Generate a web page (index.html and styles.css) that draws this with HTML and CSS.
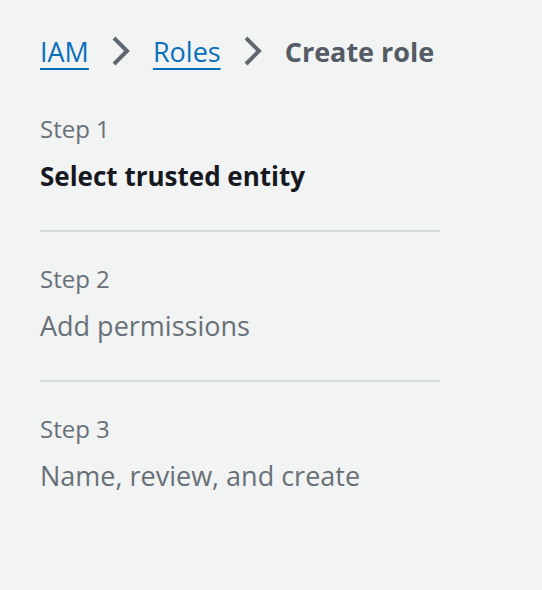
FILE: index.html
```html
<!DOCTYPE html>
<html>
<head>
<meta charset="utf-8">
<link rel="stylesheet" href="styles.css">
</head>
<body>
<div class="page">
  <nav class="crumbs">
    <a class="crumb-link" href="#">IAM</a>
    <svg class="chev" width="20" height="30" viewBox="0 0 20 30"><path d="M3 2 L16 15 L3 28" fill="none" stroke="#5f6770" stroke-width="4"/></svg>
    <a class="crumb-link" href="#">Roles</a>
    <svg class="chev" width="20" height="30" viewBox="0 0 20 30"><path d="M3 2 L16 15 L3 28" fill="none" stroke="#5f6770" stroke-width="4"/></svg>
    <span class="crumb-current">Create role</span>
  </nav>
  <ol class="steps">
    <li class="step">
      <div class="step-label">Step 1</div>
      <div class="step-title active">Select trusted entity</div>
    </li>
    <li class="step">
      <div class="step-label">Step 2</div>
      <div class="step-title">Add permissions</div>
    </li>
    <li class="step last">
      <div class="step-label">Step 3</div>
      <div class="step-title">Name, review, and create</div>
    </li>
  </ol>
</div>
</body>
</html>
```

FILE: styles.css
```css
html, body {
  margin: 0;
  padding: 0;
  background: #f2f3f3;
}
body {
  font-family: "Open Sans", "Noto Sans", sans-serif;
}
.page {
  padding: 31px 40px 0 40px;
  width: 400px;
}
.crumbs {
  display: flex;
  align-items: center;
  height: 40px;
}
.crumb-link {
  color: #0a6fba;
  font-size: 27px;
  text-decoration: underline;
  text-decoration-thickness: 2px;
  text-underline-offset: 6px;
}
.chev {
  margin: 0 22px;
}
.crumb-current {
  color: #545b64;
  font-size: 27px;
  font-weight: 700;
}
.steps {
  list-style: none;
  margin: 43px 0 0 0;
  padding: 0;
}
.step {
  border-bottom: 2px solid #d5dbdb;
  padding-bottom: 36px;
  margin-bottom: 32px;
}
.step.last {
  border-bottom: none;
}
.step-label {
  color: #687078;
  font-size: 24px;
  line-height: 30px;
}
.step-title {
  color: #687078;
  font-size: 27px;
  line-height: 36px;
  margin-top: 14px;
}
.step-title.active {
  color: #16191f;
  font-size: 26px;
  font-weight: 700;
}
```
